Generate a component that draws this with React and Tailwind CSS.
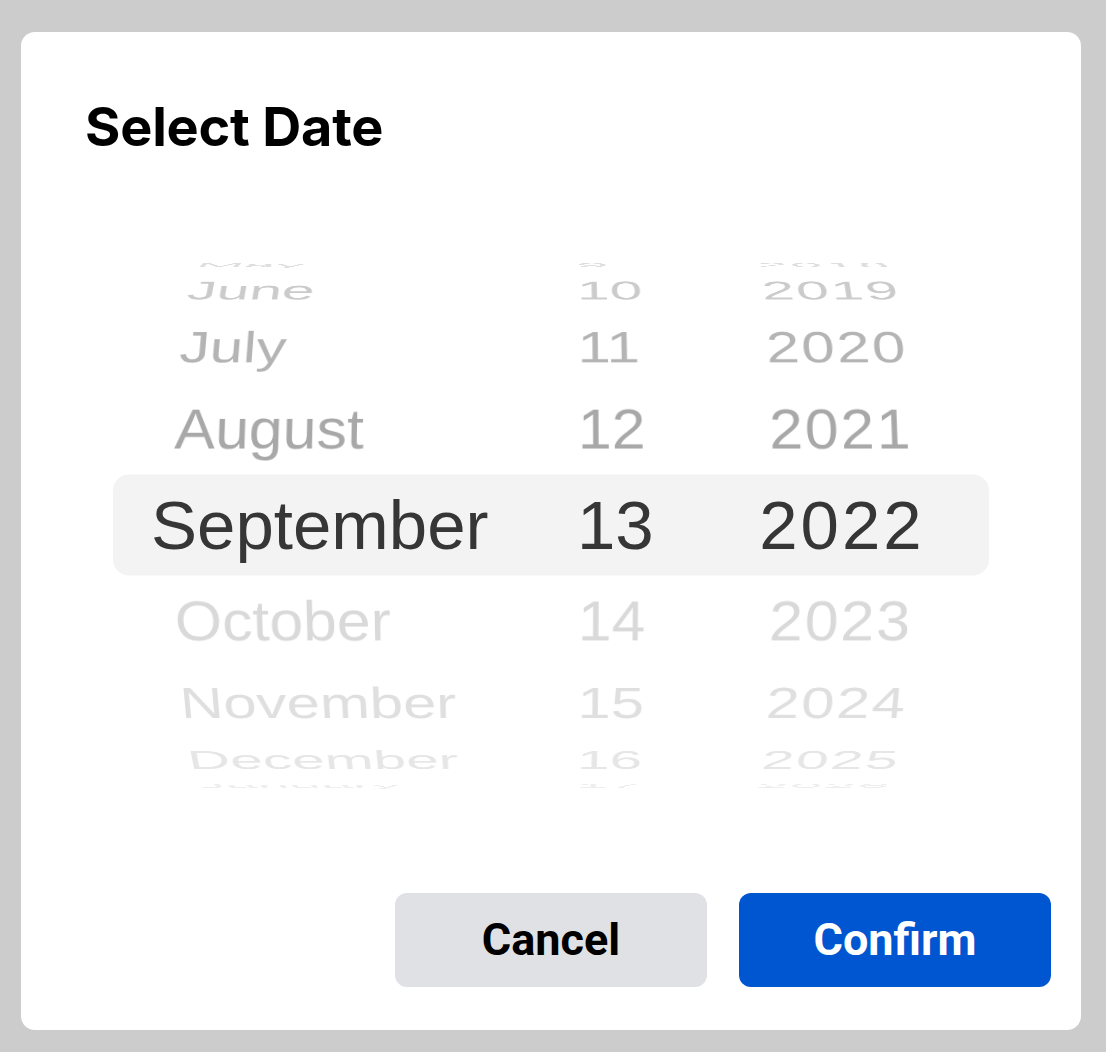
import React from "react";

const months = ["May", "June", "July", "August", "September", "October", "November", "December", "January"];
const days = ["9", "10", "11", "12", "13", "14", "15", "16", "17"];
const years = ["2018", "2019", "2020", "2021", "2022", "2023", "2024", "2025", "2026"];

// colour of each row by its offset from the selected one (-4..4)
const rowColors = {
  "-4": "#dedede",
  "-3": "#cbcbcb",
  "-2": "#b4b4b4",
  "-1": "#a8a8a8",
  1: "#d9d9d9",
  2: "#dfdfdf",
  3: "#e6e6e6",
  4: "#eeeeee",
};

const RADIUS = 282;
const STEP = 20;

const WheelColumn = ({ items, className, align }) => (
  <div className={`relative h-full transform-3d ${className}`}>
    {items.map((label, idx) => {
      const offset = idx - 4;
      if (offset === 0) return null;
      return (
        <div
          key={label}
          className={`absolute left-0 right-0 top-1/2 -mt-[30.5px] h-[61px] text-[61px] leading-none backface-hidden ${align}`}
          style={{
            color: rowColors[offset],
            transform: `translateZ(-${RADIUS}px) rotateX(${-offset * STEP}deg) translateZ(${RADIUS}px)`,
          }}
        >
          {label}
        </div>
      );
    })}
  </div>
);

const App = () => {
  return (
    <div className="min-h-screen bg-[#cccccc] pt-[32px] pl-[21px] pr-[25px] font-['Liberation_Sans',Arial,sans-serif]">
      <div className="flex h-[998px] flex-col rounded-[14px] bg-white">
        {/* Title */}
        <h2 className="pl-[64px] pt-[68px] font-['Inter',sans-serif] text-[54px] font-bold leading-none tracking-[-0.2px] text-black">
          Select Date
        </h2>

        {/* Wheel picker */}
        <div className="relative mx-[92px] mt-[107px] h-[528px] overflow-hidden perspective-[3500px]">
          <div className="flex h-full transform-3d">
            <WheelColumn items={months} className="w-[420px]" align="text-left pl-[60px]" />
            <WheelColumn items={days} className="w-[190px]" align="text-left pl-[45px]" />
            <WheelColumn items={years} className="w-[230px] tracking-[2px]" align="text-center pl-[8px]" />
          </div>

          {/* Selected row band */}
          <div className="absolute inset-x-0 top-1/2 flex h-[101px] -translate-y-1/2 items-center rounded-[16px] bg-[#f3f3f3] text-[69px] leading-none text-[#363636]">
            <div className="w-[420px] pl-[38px]">September</div>
            <div className="w-[190px] pl-[44px]">13</div>
            <div className="w-[234px] pl-[4px] text-center tracking-[3px]">2022</div>
          </div>
        </div>

        {/* Actions */}
        <div className="mt-auto flex justify-end gap-[32px] pb-[43px] pr-[30px] font-['Roboto',sans-serif] text-[45px] font-bold">
          <button className="flex h-[94px] w-[312px] items-center justify-center rounded-[12px] bg-[#e0e1e5] text-black">
            Cancel
          </button>
          <button className="flex h-[94px] w-[312px] items-center justify-center rounded-[12px] bg-[#0055d0] text-white">
            Confirm
          </button>
        </div>
      </div>
    </div>
  );
};

export default App;
